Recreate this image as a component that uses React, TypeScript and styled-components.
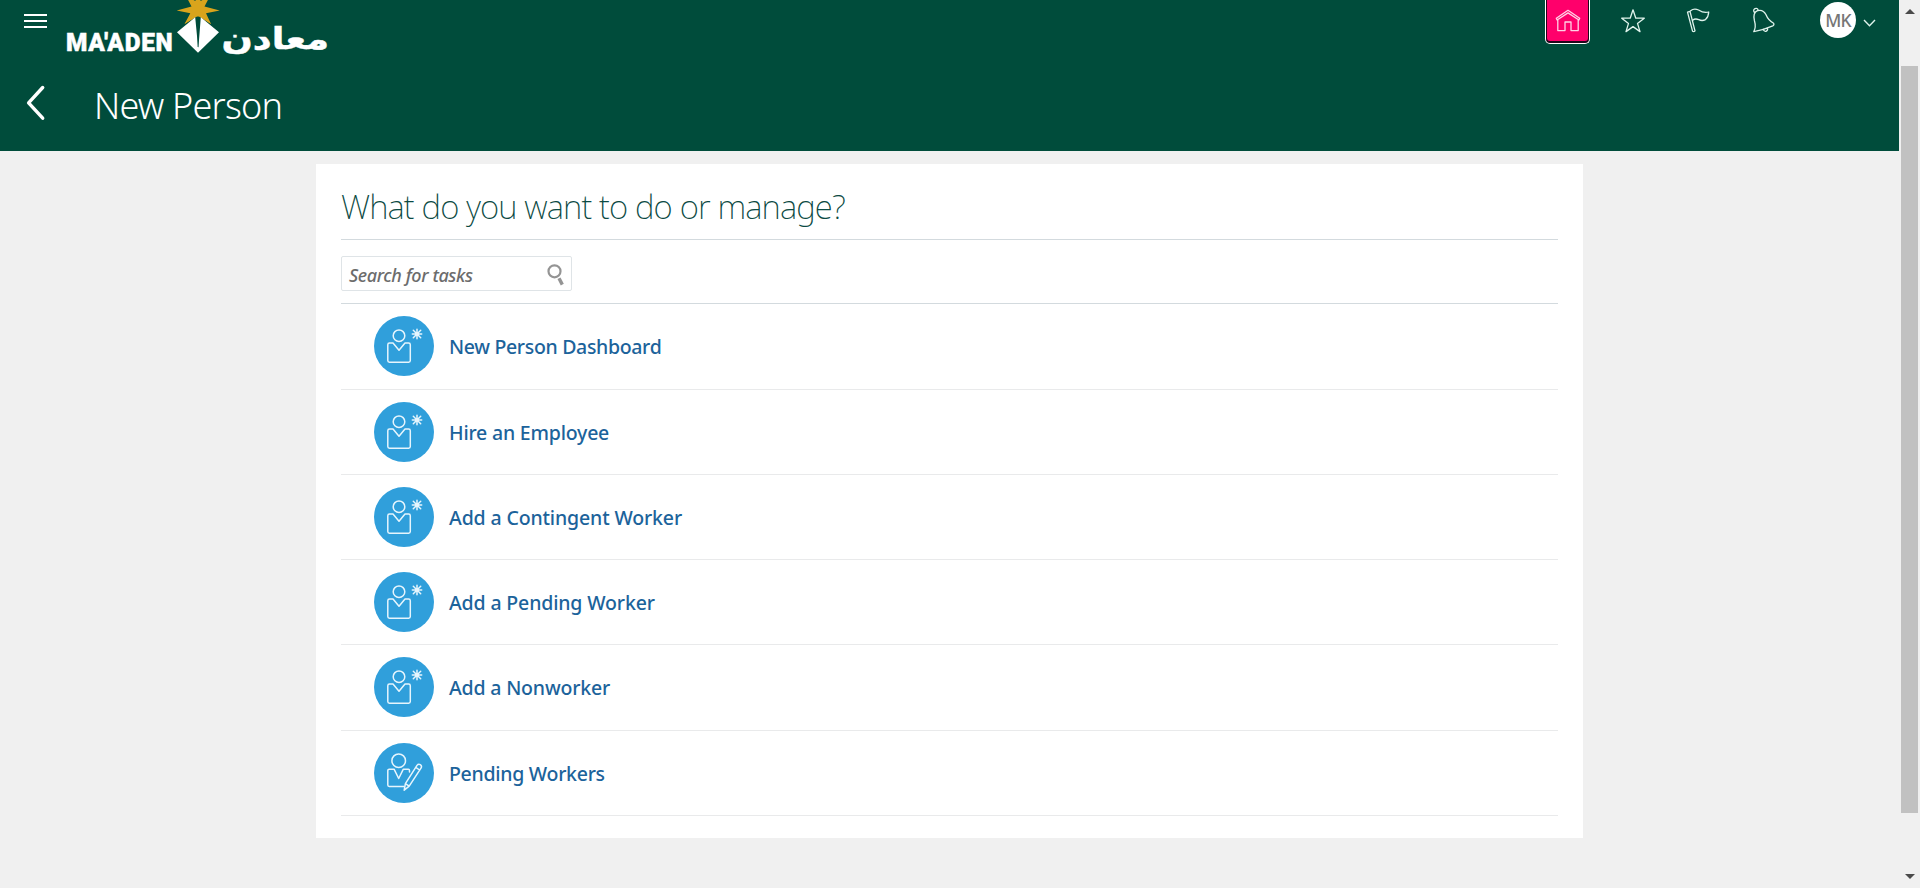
import React from "react";
import styled, { createGlobalStyle } from "styled-components";

const GlobalStyle = createGlobalStyle`
  * { box-sizing: border-box; }
  body {
    margin: 0;
    overflow: hidden;
    background: #f0f0f0;
    font-family: "Noto Sans", "Open Sans", sans-serif;
  }
`;

const Viewport = styled.div`
  display: flex;
  width: 1920px;
  height: 888px;
  overflow: hidden;
`;

const Page = styled.div`
  flex: 1;
  display: flex;
  flex-direction: column;
  align-items: center;
  background: #f0f0f0;
`;

const Header = styled.header`
  width: 100%;
  height: 151px;
  background: #004c3b;
  color: #fff;
`;

const TopBar = styled.div`
  display: flex;
  align-items: flex-start;
  height: 60px;
  padding-left: 24px;
`;

const MenuButton = styled.button`
  display: flex;
  flex-direction: column;
  gap: 4px;
  width: 23px;
  margin: 14px 17px 0 0;
  padding: 0;
  border: 0;
  background: none;
`;

const MenuLine = styled.span`
  width: 23px;
  height: 2px;
  background: #fff;
`;

const Logo = styled.svg`
  display: block;
  width: 270px;
  height: 58px;
`;

const LogoLatin = styled.text`
  font-family: Roboto, "Liberation Sans", sans-serif;
  font-weight: 900;
  font-size: 26.5px;
  letter-spacing: 0.8px;
  fill: #fff;
  stroke: #fff;
  stroke-width: 0.5;
`;

const LogoArabic = styled.text`
  font-family: "DejaVu Sans", sans-serif;
  font-weight: 700;
  font-size: 30px;
  fill: #fff;
  stroke: #fff;
  stroke-width: 0.5;
`;

const Actions = styled.nav`
  display: flex;
  align-items: flex-start;
  margin-left: auto;
  padding-right: 23px;
`;

const HomeButton = styled.button`
  display: flex;
  width: 45px;
  height: 44px;
  margin: 0 27px 0 0;
  padding: 0;
  border: 1px solid #fff;
  border-top: 0;
  border-radius: 0 0 5px 5px;
  background: #22051a;
`;

const HomeFace = styled.span`
  display: flex;
  justify-content: center;
  width: 41px;
  height: 41px;
  margin: 0 1px;
  padding-top: 6px;
  border-radius: 0 0 3px 3px;
  background: #ff006b;
`;

const ActionIcon = styled.svg<{ $gap?: number }>`
  display: block;
  width: 32px;
  height: 32px;
  margin-top: 5px;
  margin-right: ${(p) => p.$gap ?? 0}px;
  fill: none;
  stroke: #dff3ec;
  stroke-width: 1.3;
  stroke-linejoin: round;
  stroke-linecap: round;
`;

const HomeIcon = styled(ActionIcon)`
  margin: 0;
  stroke: #ffd3e6;
`;

const Avatar = styled.div`
  display: flex;
  align-items: center;
  justify-content: center;
  width: 36px;
  height: 36px;
  margin-top: 2px;
  border-radius: 50%;
  background: #fff;
  color: #767676;
  font-size: 17.5px;
  font-weight: 500;
  letter-spacing: -0.7px;
`;

const Caret = styled.svg`
  width: 13px;
  height: 8px;
  margin: 19px 0 0 7px;
  fill: none;
  stroke: #dff3ec;
  stroke-width: 1.4;
`;

const TitleBar = styled.div`
  display: flex;
  align-items: center;
  height: 91px;
  padding: 0 0 5px 25px;
`;

const BackIcon = styled.svg`
  width: 22px;
  height: 38px;
  margin-right: 47px;
  fill: none;
  stroke: #fff;
  stroke-width: 3.4;
  stroke-linecap: round;
  stroke-linejoin: round;
`;

const PageTitle = styled.h1`
  margin: 5px 0 0;
  font-size: 36px;
  font-weight: 300;
  line-height: 50px;
  letter-spacing: -0.8px;
`;

const Card = styled.main`
  width: 1267px;
  height: 674px;
  margin-top: 13px;
  padding: 0 25px;
  background: #fff;
`;

const CardTitle = styled.h2`
  height: 76px;
  margin: 0;
  padding-top: 19px;
  border-bottom: 1px solid #d3dade;
  color: #0b4a43;
  font-size: 33px;
  font-weight: 250;
  line-height: 48px;
  letter-spacing: -0.87px;
  white-space: nowrap;
`;

const SearchBar = styled.div`
  height: 64px;
  padding-top: 16px;
  border-bottom: 1px solid #d3dade;
`;

const SearchBox = styled.div`
  display: flex;
  align-items: center;
  justify-content: space-between;
  width: 231px;
  height: 35px;
  padding: 0 6px 0 7px;
  border: 1px solid #dfe4e7;
  border-radius: 2px;
`;

const Placeholder = styled.span`
  padding-top: 3px;
  color: #6c6c6c;
  font-size: 18px;
  font-style: italic;
  font-weight: 550;
  line-height: 24px;
  letter-spacing: -0.38px;
`;

const SearchIcon = styled.svg`
  width: 18px;
  height: 22px;
  margin-top: 2px;
  fill: none;
  stroke: #949494;
`;

const TaskList = styled.ul`
  margin: 0;
  padding: 0;
  list-style: none;
`;

const TaskRow = styled.li<{ $height: number }>`
  display: flex;
  align-items: flex-start;
  height: ${(p) => p.$height}px;
  padding: 12px 0 0 33px;
  border-bottom: 1px solid #e9eaeb;
`;

const TaskIcon = styled.svg`
  width: 60px;
  height: 60px;
  margin-right: 15px;
  border-radius: 50%;
  background: #309fdb;
  fill: none;
  stroke: #e6f5fd;
  stroke-width: 1.5;
  stroke-linejoin: round;
  stroke-linecap: round;
`;

const TaskLink = styled.a<{ $tracking: number }>`
  color: #1c639b;
  font-size: 19.5px;
  font-weight: 500;
  line-height: 62px;
  letter-spacing: ${(p) => p.$tracking}px;
`;

const Scrollbar = styled.aside`
  display: flex;
  flex-direction: column;
  align-items: center;
  width: 21px;
  height: 888px;
  background: #f0f0f0;
`;

const ScrollThumb = styled.div`
  width: 17px;
  height: 747px;
  margin: 52px 0 61px;
  background: #c1c1c1;
`;

const ScrollArrow = styled.div<{ $up?: boolean }>`
  width: 0;
  height: 5px;
  margin-top: ${(p) => (p.$up ? 9 : 0)}px;
  border: 5px solid transparent;
  border-top: ${(p) => (p.$up ? "0" : "5px solid #4a4a4a")};
  border-bottom: ${(p) => (p.$up ? "5px solid #4a4a4a" : "0")};
`;

type Task = { label: string; kind: "new" | "edit"; height: number; tracking: number };

const tasks: Task[] = [
  { label: "New Person Dashboard", kind: "new", height: 86, tracking: -0.33 },
  { label: "Hire an Employee", kind: "new", height: 85, tracking: -0.2 },
  { label: "Add a Contingent Worker", kind: "new", height: 85, tracking: -0.14 },
  { label: "Add a Pending Worker", kind: "new", height: 85, tracking: -0.15 },
  { label: "Add a Nonworker", kind: "new", height: 86, tracking: -0.18 },
  { label: "Pending Workers", kind: "edit", height: 85, tracking: -0.28 },
];

function PersonIcon({ kind }: { kind: Task["kind"] }) {
  if (kind === "edit") {
    return (
      <TaskIcon viewBox="0 0 60 60">
        <circle cx="24.7" cy="17.7" r="6.8" />
        <path d="M30 43.4H15.2Q13.8 43.4 13.8 42V27.6Q13.8 26.3 15.2 26.3H20.2L24.7 35.5L29.2 26.3H34.4Q35.5 26.3 35.5 27.6V29" />
        <path d="M30.2 47.2L31.4 40.6L43 22.4Q44.4 20.6 46.3 21.7Q48.3 23.1 47 25.2L35.2 43.2ZM31.4 40.6L35.2 43.2M41.8 24.4L45.6 27" />
      </TaskIcon>
    );
  }
  return (
    <TaskIcon viewBox="0 0 60 60">
      <circle cx="25" cy="19.7" r="5.8" />
      <path d="M19 27L25 34.3L31 27H34.6Q36.3 27 36.3 28.7V44.6Q36.3 46.2 34.6 46.2H15.5Q13.8 46.2 13.8 44.6V28.7Q13.8 27 15.5 27Z" />
      <path d="M43 13.3V22.7M38.3 18H47.7M39.3 14.3L46.7 21.7M46.7 14.3L39.3 21.7" />
    </TaskIcon>
  );
}

function CompanyLogo() {
  return (
    <Logo viewBox="64 0 270 58">
      <path
        fill="#d9a41c"
        d="M198 -12L200.6 1L210 -4L204.5 6.5L219.7 10.6L206 13.2L211 24L198 15.8L184.5 24L190.3 13.2L176.7 10.6L191.5 6.5L186 -4L195.4 1Z"
      />
      <path fill="#d9a41c" d="M198 10L208 19.5L211 24L200 16.5H196L184.5 24L188 19.5Z" />
      <path fill="#fff" d="M195.2 17.2L177 32.3L198 52.7L219 32.3L200.8 17.2L199 40L198.2 48L197.4 40Z" />
      <path fill="none" stroke="#004c3b" strokeWidth="0.8" d="M198 18V47" />
      <LogoLatin x="66" y="51" textLength="107.5" lengthAdjust="spacingAndGlyphs">
        MA'ADEN
      </LogoLatin>
      <LogoArabic x="221.5" y="48.5" textLength="107.5" lengthAdjust="spacingAndGlyphs">
        معادن
      </LogoArabic>
    </Logo>
  );
}

export default function App() {
  return (
    <Viewport>
      <GlobalStyle />
      <Page>
        <Header>
          <TopBar>
            <MenuButton aria-label="Navigator">
              <MenuLine />
              <MenuLine />
              <MenuLine />
            </MenuButton>
            <CompanyLogo />
            <Actions>
              <HomeButton aria-label="Home">
                <HomeFace>
                  <HomeIcon viewBox="0 0 32 32">
                    <path d="M4.3 12.2L16 4.3L27.7 12.2L26.9 14L16 6.9L5.1 14ZM5.8 14V24.6H13V16H19V24.6H26.2V14" />
                  </HomeIcon>
                </HomeFace>
              </HomeButton>
              <ActionIcon viewBox="0 0 32 32" $gap={34}>
                <path d="M16 4.8L18.8 13.2H27.3L20.5 18.4L23 26.6L16 21.6L9 26.6L11.5 18.4L4.7 13.2H13.2Z" />
              </ActionIcon>
              <ActionIcon viewBox="0 0 32 32" $gap={34}>
                <path d="M4.5 7.1L7 6.4L12 25.8Q11 27.2 9.6 26.3ZM7.6 5.8Q11 3 15.5 5Q21 8.5 25.7 7Q25.5 12 22.5 14.6Q19 16.4 15.8 14.6Q12 13.2 9.7 15.2" />
              </ActionIcon>
              <ActionIcon viewBox="0 0 32 32" $gap={39}>
                <path d="M4.8 26.6Q7.3 22 5.4 15.5Q3.6 8 8.5 5.7Q14 4 16.9 9.5Q19.3 15.4 24.6 18.2Q25.5 20 23.8 20.8Q14 25 4.8 26.6ZM5.5 7.5Q3.6 5 6 3.6Q8.4 2.6 9.2 5.4M14.2 24.2Q14.8 26.8 17 26.3Q19.2 25.5 18.4 22.8" />
              </ActionIcon>
              <Avatar>MK</Avatar>
              <Caret viewBox="0 0 13 8">
                <path d="M1 1L6.5 6.7L12 1" />
              </Caret>
            </Actions>
          </TopBar>
          <TitleBar>
            <BackIcon viewBox="0 0 22 38">
              <path d="M17.7 3.5L3.6 18.8L17.7 34.2" />
            </BackIcon>
            <PageTitle>New Person</PageTitle>
          </TitleBar>
        </Header>
        <Card>
          <CardTitle>What do you want to do or manage?</CardTitle>
          <SearchBar>
            <SearchBox>
              <Placeholder>Search for tasks</Placeholder>
              <SearchIcon viewBox="0 0 18 22">
                <circle cx="7.5" cy="7.3" r="6" strokeWidth="2.2" />
                <path d="M12 14.3L15.3 20.6" strokeWidth="3.4" />
              </SearchIcon>
            </SearchBox>
          </SearchBar>
          <TaskList>
            {tasks.map((task) => (
              <TaskRow key={task.label} $height={task.height}>
                <PersonIcon kind={task.kind} />
                <TaskLink $tracking={task.tracking}>{task.label}</TaskLink>
              </TaskRow>
            ))}
          </TaskList>
        </Card>
      </Page>
      <Scrollbar>
        <ScrollArrow $up />
        <ScrollThumb />
        <ScrollArrow />
      </Scrollbar>
    </Viewport>
  );
}
